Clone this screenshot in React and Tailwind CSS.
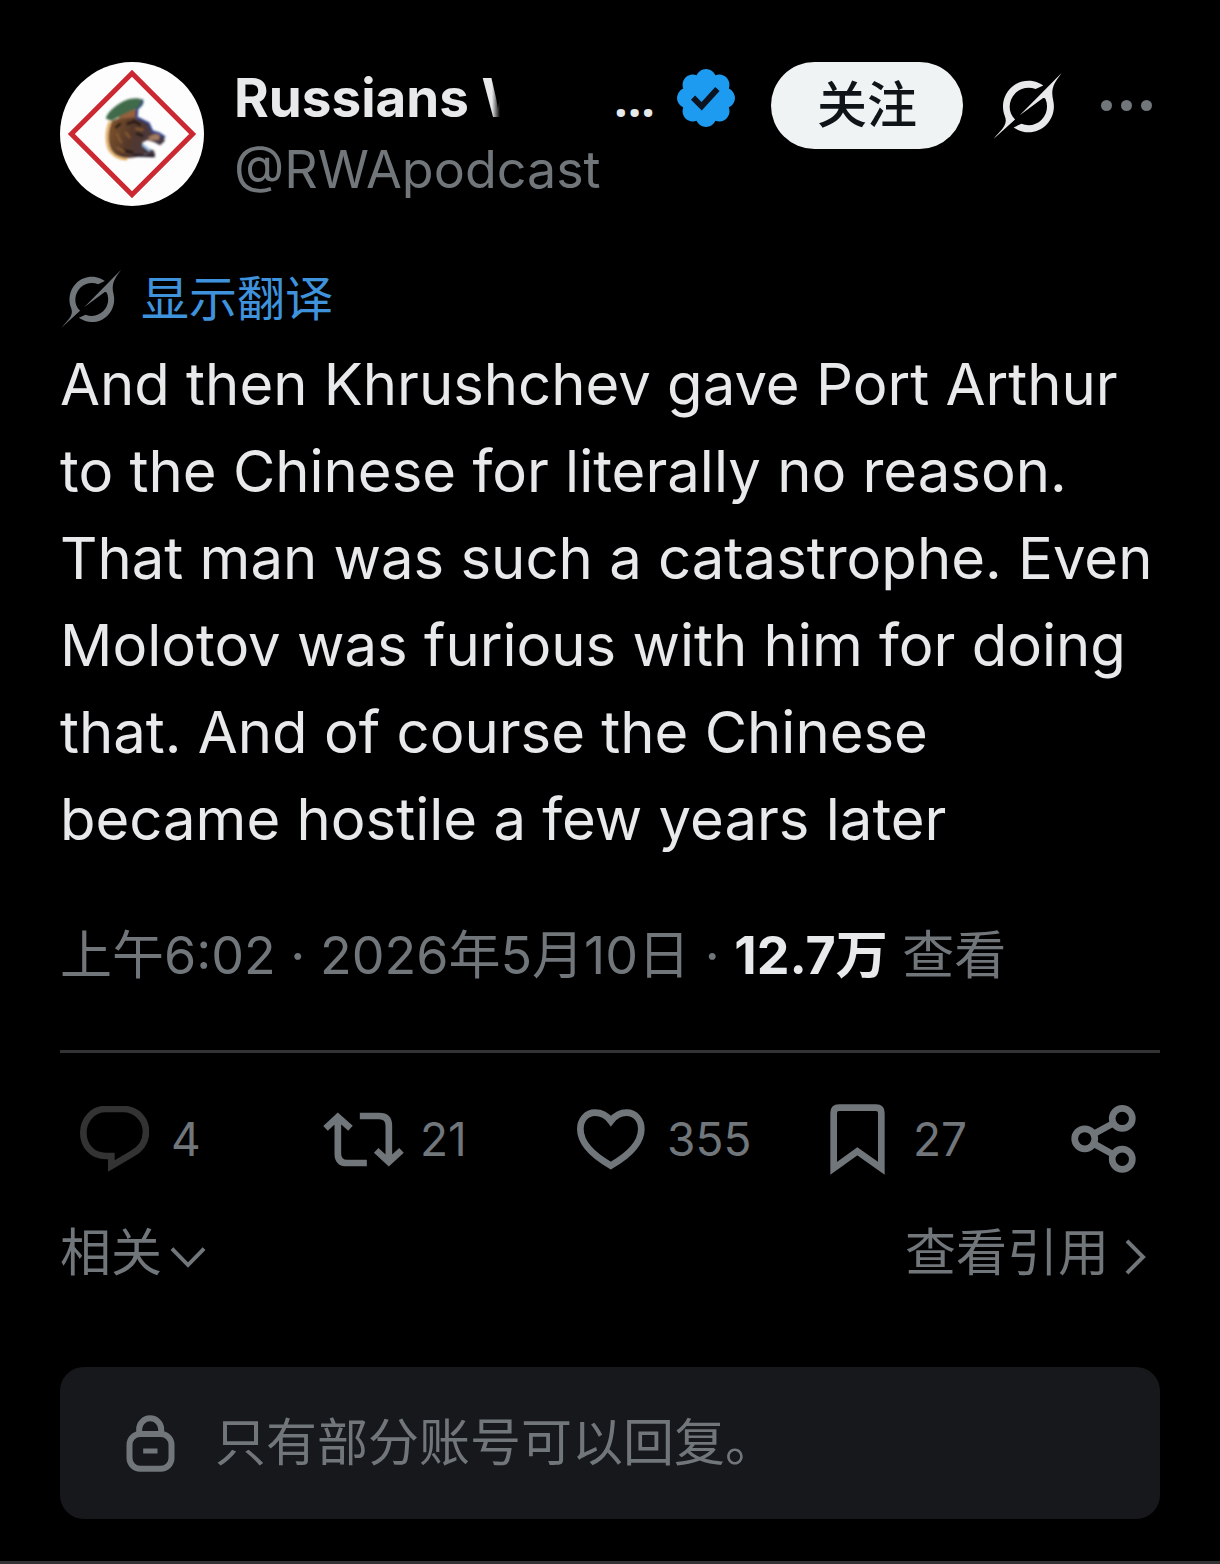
const GrokIcon = ({ className }) => (
  <svg viewBox="0 0 33 32" fill="currentColor" className={className} aria-hidden="true">
    <path d="M12.745 20.54l10.97-8.19c.539-.4 1.307-.244 1.564.38 1.349 3.288.746 7.241-1.938 9.955-2.683 2.714-6.417 3.31-9.83 1.954l-3.728 1.745c5.347 3.697 11.84 2.782 15.898-1.324 3.219-3.255 4.216-7.692 3.284-11.693l.008.009c-1.351-5.878.332-8.227 3.782-13.031L33 0l-4.54 4.59v-.014L12.743 20.544m-2.263 1.987c-3.837-3.707-3.175-9.446.1-12.755 2.42-2.449 6.388-3.448 9.852-1.979l3.72-1.737c-.67-.49-1.53-1.017-2.515-1.387-4.455-1.854-9.789-.931-13.41 2.728-3.483 3.523-4.579 8.94-2.697 13.561 1.405 3.454-.899 5.898-3.22 8.364C1.49 30.2.666 31.074 0 32l10.478-9.466" />
  </svg>
);

const VerifiedBadge = () => (
  <svg viewBox="1.6 1.6 18.8 18.8" className="size-[58px] shrink-0" role="img" aria-label="已认证">
    <path
      fill="#1d9bf0"
      d="M20.396 11c-.018-.646-.215-1.275-.57-1.816-.354-.54-.852-.972-1.438-1.246.223-.607.27-1.264.14-1.897-.131-.634-.437-1.218-.882-1.687-.47-.445-1.053-.75-1.687-.882-.633-.13-1.29-.083-1.897.14-.273-.587-.704-1.086-1.245-1.44S11.647 1.62 11 1.604c-.646.017-1.273.213-1.813.568s-.969.854-1.24 1.44c-.608-.223-1.267-.272-1.902-.14-.635.13-1.22.436-1.69.882-.445.47-.749 1.055-.878 1.688-.13.633-.08 1.29.144 1.896-.587.274-1.087.705-1.443 1.245-.356.54-.555 1.17-.574 1.817.02.647.218 1.276.574 1.817.356.54.856.972 1.443 1.245-.224.606-.274 1.263-.144 1.896.13.634.433 1.218.877 1.688.47.443 1.054.747 1.687.878.633.132 1.29.084 1.897-.136.274.586.705 1.084 1.246 1.439.54.354 1.17.551 1.816.569.647-.016 1.276-.213 1.817-.567s.972-.854 1.245-1.44c.604.239 1.266.296 1.903.164.636-.132 1.22-.447 1.68-.907.46-.46.776-1.044.908-1.681s.075-1.299-.165-1.903c.586-.274 1.084-.705 1.439-1.246.354-.54.551-1.17.569-1.816z"
    />
    <path d="M6.8 10.9L9.6 13.7L14.7 8.1" fill="none" stroke="#0b1420" strokeWidth="1.9" />
  </svg>
);

const Avatar = () => (
  <svg viewBox="30 36 432 432" className="size-36 shrink-0 rounded-full" role="img" aria-label="头像">
    <defs>
      <filter id="soft" x="-10%" y="-10%" width="120%" height="120%">
        <feGaussianBlur stdDeviation="3" />
      </filter>
      <linearGradient id="fur" x1="0" y1="0" x2="1" y2="0.3">
        <stop offset="0" stopColor="#8a5a2c" />
        <stop offset="0.5" stopColor="#54382a" />
        <stop offset="1" stopColor="#453844" />
      </linearGradient>
    </defs>
    <rect x="30" y="36" width="432" height="432" fill="#fdfdfd" />
    <path d="M246 70L428 252L246 434L64 252Z" fill="none" stroke="#cc2832" strokeWidth="15" />
    <g filter="url(#soft)">
      <path d="M186 212C172 240 170 284 188 306C208 328 244 330 284 312L316 318L312 302L284 290L276 278L292 270L312 276L330 286L344 274L342 260L326 252L306 246L298 222L270 204L258 206L264 178L206 190L208 204Z" fill="url(#fur)" />
      <path d="M180 214C166 244 166 290 186 310C200 324 214 328 232 328" fill="none" stroke="#e2a34c" strokeWidth="6" />
      <path d="M262 176L260 202L296 220L307 244L328 250L345 262" fill="none" stroke="#27408a" strokeWidth="6" />
      <path d="M206 190L256 174L256 202L208 206Z" fill="#96603c" />
      <path d="M168 206C168 190 200 162 224 152C250 142 276 142 278 154C280 168 262 176 240 184L184 212Z" fill="#3f6a48" />
      <path d="M276 148C282 158 272 172 258 178" fill="none" stroke="#1c3a78" strokeWidth="5" />
      <path d="M294 262L314 252L330 256L326 270L300 270Z" fill="#a37a62" />
      <path d="M230 222L254 214L272 226M196 234L212 220M218 300L250 308M258 250L280 258" fill="none" stroke="#241915" strokeWidth="8" />
      <path d="M200 250L214 280M226 246L240 264M200 292L224 306M256 236L280 240" fill="none" stroke="#85582f" strokeWidth="7" />
      <path d="M278 284L300 302" fill="none" stroke="#9cc4ec" strokeWidth="7" />
      <path d="M250 316L314 318" fill="none" stroke="#15101c" strokeWidth="7" />
    </g>
  </svg>
);

const ReplyIcon = () => (
  <svg viewBox="93 45 207 198" className="h-[66px] w-[69px]" fill="none" stroke="currentColor" strokeWidth="20" aria-hidden="true">
    <path d="M170 54H222C262 54 291 84 291 122C291 152 275 174 250 188L187 225V195H170C130 195 103 164 103 125C103 86 132 54 170 54Z" />
  </svg>
);

const RepostIcon = () => (
  <svg viewBox="817 63 242 165" className="h-[55px] w-[81px]" fill="none" stroke="currentColor" strokeWidth="20" aria-hidden="true">
    <path d="M824 112L861 78L899 112M861 80V188Q861 216 889 216H948" />
    <path d="M927 75H985Q1014 75 1014 104V210M976 178L1014 213L1052 178" />
  </svg>
);

const HeartIcon = () => (
  <svg viewBox="80 58 203 182" className="h-[61px] w-[68px]" fill="none" stroke="currentColor" strokeWidth="20" aria-hidden="true">
    <path d="M181 94C168 76 150 69 134 69C108 69 90 90 90 118C90 160 130 198 181 227C232 198 272 160 272 118C272 90 254 69 228 69C212 69 195 76 181 94Z" />
  </svg>
);

const BookmarkIcon = () => (
  <svg viewBox="840 43 165 213" className="h-[71px] w-[55px]" fill="none" stroke="currentColor" strokeWidth="20" aria-hidden="true">
    <path d="M851 236V70Q851 54 867 54H978Q994 54 994 70V236L922 185Z" />
  </svg>
);

const ShareIcon = () => (
  <svg viewBox="542 44 194 203" className="h-[68px] w-[65px]" fill="none" stroke="currentColor" strokeWidth="20" aria-hidden="true">
    <circle cx="583" cy="145" r="30" />
    <circle cx="695" cy="84" r="30" />
    <circle cx="695" cy="206" r="30" />
    <path d="M609 131L669 98M609 159L669 192" />
  </svg>
);

const LockIcon = () => (
  <svg viewBox="230 188 146 171" className="h-[57px] w-[49px]" fill="none" stroke="currentColor" strokeWidth="18" aria-hidden="true">
    <rect x="240" y="245" width="126" height="104" rx="32" />
    <path d="M269 245V231A33 33 0 0 1 335 231V245" />
    <path d="M281 296H324" strokeWidth="15" />
  </svg>
);

const actions = [
  { label: '回复', count: '4', Icon: ReplyIcon, gap: 'gap-[22px]', tone: 'text-[#333333]' },
  { label: '转帖', count: '21', Icon: RepostIcon, gap: 'gap-4', tone: '' },
  { label: '喜欢', count: '355', Icon: HeartIcon, gap: 'gap-[22px]', tone: '' },
  { label: '书签', count: '27', Icon: BookmarkIcon, gap: 'gap-7', tone: '' },
];

export default function App() {
  return (
    <main className="flex min-h-screen flex-col justify-between bg-black font-['Inter','Noto_Sans_CJK_SC',sans-serif] text-[#e7e9ea]">
      <article className="px-15 pt-[62px]">
        <header className="flex items-start">
          <Avatar />
          <div className="ml-[30px] min-w-0 flex-1">
            <div className="flex h-[72px] items-center">
              <h1 className="flex w-[421px] items-baseline justify-between text-[53px] leading-[72px] font-bold">
                <span>
                  Russians{' '}
                  <span className="inline-block [mask-image:linear-gradient(to_right,#000_10px,transparent_18px)]">W</span>
                </span>
                <span className="font-['Open_Sans',sans-serif] text-[48px]">...</span>
              </h1>
              <span className="ml-[22px]">
                <VerifiedBadge />
              </span>
            </div>
            <p className="text-[52px] leading-[72px] text-[#71767b]">@RWApodcast</p>
          </div>
          <div className="flex h-[87px] items-center">
            <button className="h-[87px] w-48 rounded-full bg-[#eff3f4] text-[50px] leading-[87px] font-medium text-[#0f1419]">关注</button>
            <button className="ml-[30px]" aria-label="Grok">
              <GrokIcon className="h-[66px] w-[69px]" />
            </button>
            <button className="mr-2 ml-[39px] flex gap-[9px]" aria-label="更多">
              <span className="size-[11px] rounded-full bg-[#71767b]" />
              <span className="size-[11px] rounded-full bg-[#71767b]" />
              <span className="size-[11px] rounded-full bg-[#71767b]" />
            </button>
          </div>
        </header>

        <button className="mt-16 flex h-[58px] items-center gap-5 pl-px text-[48px] leading-[58px] text-[#3f92dc]">
          <GrokIcon className="h-[58px] w-[60px] text-[#71767b]" />
          显示翻译
        </button>

        <p className="mt-[13px] text-[58px] leading-[87px]">
          And then Khrushchev gave Port Arthur to the Chinese for literally no reason. That man was such a catastrophe. Even Molotov was furious with him for doing that. And of course the Chinese became hostile a few years later
        </p>

        <p className="mt-[61px] text-[52px] leading-[64px] text-[#71767b]">
          <time>上午6:02 · 2026年5月10日</time> · <strong className="font-bold text-[#e7e9ea]">12.7万</strong> 查看
        </p>

        <div className="mt-[62px] grid h-[173px] grid-cols-[243fr_254fr_253fr_241fr_auto] items-center border-t-3 border-[#333336] pt-0.5 pr-6 pl-5 text-[46px] text-[#71767b]">
          {actions.map(({ label, count, Icon, gap, tone }) => (
            <button key={label} aria-label={`${label} ${count}`} className={`flex items-center ${gap}`}>
              <span className={tone}>
                <Icon />
              </span>
              {count}
            </button>
          ))}
          <button aria-label="分享">
            <ShareIcon />
          </button>
        </div>

        <div className="flex justify-between text-[51px] leading-[60px] text-[#71767b]">
          <button className="flex items-center gap-2">
            相关
            <svg viewBox="359 473 108 64" className="mt-2 h-[21px] w-9" fill="none" stroke="currentColor" strokeWidth="12" aria-hidden="true">
              <path d="M364 478L413 528L462 478" />
            </svg>
          </button>
          <a href="#quotes" className="mr-[14px] flex items-center gap-4">
            查看引用
            <svg viewBox="705 449 64 108" className="mt-2 h-9 w-[21px]" fill="none" stroke="currentColor" strokeWidth="12" aria-hidden="true">
              <path d="M711 454L760 503L711 552" />
            </svg>
          </a>
        </div>

        <div className="mt-[84px] flex h-[152px] items-center gap-10 rounded-3xl bg-[#16181c] pl-[66px] text-[51px] text-[#71767b]">
          <LockIcon />
          <p>只有部分账号可以回复。</p>
        </div>
      </article>
      <hr className="border-t-3 border-[#333336]" />
    </main>
  );
}
